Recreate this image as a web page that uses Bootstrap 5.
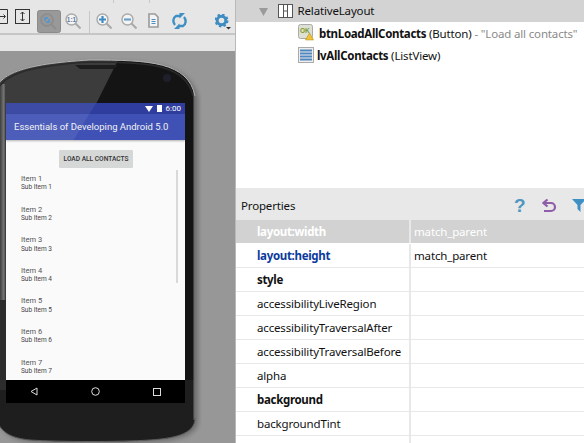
<!DOCTYPE html>
<html lang="en"><head><meta charset="utf-8"><title>Layout editor</title>
<link rel="stylesheet" href="https://cdn.jsdelivr.net/npm/bootstrap@5.3.0/dist/css/bootstrap.min.css">
<style>
html,body{width:584px;height:443px;overflow:hidden;margin:0;background:#fff}
body{font-family:"Noto Sans","Liberation Sans",sans-serif;font-size:11.5px;letter-spacing:-.16px;color:#111}
b,.bd,.key{letter-spacing:-.32px}
.ide{width:584px;height:443px}
.design{width:236px;background:#e6e6e6;overflow:hidden;border-right:1px solid #b8b8b8;flex:none}
.tools{height:35px;border-bottom:2px solid #c6c6c6;position:relative;flex:none}
.tick{position:absolute;top:0;width:1px;height:3px;background:#c6c6c6}
.tool{position:absolute;display:block}
.strip{height:16px;flex:none}
.canvas{flex:1;background:#979797;position:relative;overflow:hidden}
.shell{position:absolute;left:0;top:0}
.screen{position:absolute;left:6px;top:52px;width:179px;height:300px;background:#fafafa;display:flex;flex-direction:column;overflow:hidden}
.sheen{position:absolute;left:0;top:0;width:100%;height:38px;background:rgba(255,255,255,.07);clip-path:polygon(0 0,90px 0,67px 38px,0 38px)}
.sbar{height:11px;background:#2f3e9e;color:#fff;font-family:Roboto,sans-serif;font-size:8px;letter-spacing:0;line-height:11px;flex:none}
.abar{height:26px;background:#3f51b5;color:#f2f2f2;font-family:Roboto,sans-serif;font-size:9.5px;letter-spacing:0;line-height:26px;padding-left:8px;flex:none;box-shadow:0 1px 2px rgba(0,0,0,.3)}
.sim{flex:1;position:relative;overflow:hidden;font-family:Roboto,sans-serif;letter-spacing:0}
.loadbtn{display:block;width:74px;height:18px;margin:10px 0 0 53px;background:#d6d7d7;color:#333;font-size:6.6px;font-weight:500;line-height:18px;text-align:center;border-radius:1px;white-space:nowrap}
.sc{position:absolute;left:170px;top:30px;width:2px;height:113px;background:#d9d9d9}
.it{height:30.6px;margin-left:15px;padding-top:1px;line-height:8.4px;color:#444}
.it b{display:block;font-weight:400;font-size:7.5px;letter-spacing:0;color:#555}
.it i{display:block;font-style:normal;font-size:6.5px;color:#444}
.items{padding-top:6px}
.navb{height:23px;background:#000;flex:none;padding:0 24px}
.side{flex:1;min-width:0;background:#fff}
.tree{height:188px;flex:none;white-space:nowrap;overflow:hidden}
.tr{height:22px;line-height:22px;position:relative}
.sel{background:#d3d3d3;padding-left:61.500px}
.gt{color:#8a8a8a}
.prophead{height:32px;background:#e8e8e8;line-height:35px;padding-left:5px;position:relative;flex:none}
.pr{height:24px;line-height:23px;border-bottom:1px solid #e8e8e8;flex:none}
.pn{width:175px;padding-left:21px;border-right:2px solid #e8e8e8;flex:none}
.pv{padding-left:3px}
.pr.on{background:#d2d2d2;color:#fff;border-bottom-color:#fff}
.pn.key{color:#0b3a9c;font-weight:700}
.pn.bd{font-weight:700}
</style></head><body>
<div class="ide d-flex">
 <div class="design d-flex flex-column">
  <div class="tools">
   <span class="tick" style="left:113px"></span><span class="tick" style="left:149px"></span>
   <svg class="tool" style="left:0;top:9px" width="31" height="16" viewBox="0 0 31 16" fill="none" stroke="#333"><path d="M-2 .5H7.500V14.500H-2"/><path d="M0 7.500H5M3.500 5.500l2 2-2 2" /><rect x="15.500" y=".5" width="14" height="14"/><path d="M22.500 3v9M20.500 5l2-2 2 2M20.500 10l2 2 2-2"/></svg>
   <svg class="tool" style="left:37px;top:10px" width="24" height="23" viewBox="0 0 24 23"><rect x=".5" y=".5" width="23" height="22" rx="2" fill="#999" stroke="#8b8b8b"/><circle cx="10" cy="10" r="6" fill="none" stroke="#8e8e8e" stroke-width="2"/><path d="M14 14l5 5" stroke="#8e8e8e" stroke-width="2"/><path d="M7 7h4v2H9v2H7zM13 13H9v-2h2V9h2z" fill="#5f95c4"/></svg>
   <svg class="tool" style="left:65px;top:13px" width="16" height="16" viewBox="0 0 16 16"><circle cx="6.500" cy="6.500" r="5.500" fill="#f4f4f4" stroke="#a9a9a9" stroke-width="1.400"/><path d="M10.500 10.500l5 5" stroke="#a9a9a9" stroke-width="2"/><text x="6.500" y="9" text-anchor="middle" font-size="6.500" font-weight="700" fill="#5f7f9f" font-family="Liberation Sans" letter-spacing="0">1:1</text></svg>
   <span class="tick" style="left:89px;top:11px;height:22px"></span>
   <svg class="tool" style="left:96px;top:13px" width="16" height="16" viewBox="0 0 16 16"><circle cx="6.500" cy="6.500" r="5.500" fill="#f4f4f4" stroke="#a9a9a9" stroke-width="1.400"/><path d="M10.500 10.500l5 5" stroke="#a9a9a9" stroke-width="2"/><path d="M3 6.500h7M6.500 3v7" stroke="#3f8cc2" stroke-width="2.200"/></svg>
   <svg class="tool" style="left:121px;top:13px" width="16" height="16" viewBox="0 0 16 16"><circle cx="6.500" cy="6.500" r="5.500" fill="#f4f4f4" stroke="#a9a9a9" stroke-width="1.400"/><path d="M10.500 10.500l5 5" stroke="#a9a9a9" stroke-width="2"/><path d="M3 6.500h7" stroke="#6aa3cb" stroke-width="2.200"/></svg>
   <svg class="tool" style="left:148px;top:13px" width="11" height="15" viewBox="0 0 11 15"><path d="M1 1h6l3 3v10H1z" fill="#f4f4f4" stroke="#9a9a9a" stroke-width="1.600"/><path d="M3.500 6.500h4M3.500 8.500h4M3.500 10.500h4" stroke="#4a90c0"/></svg>
   <svg class="tool" style="left:172px;top:13px" width="15" height="16" viewBox="0 0 15 16" fill="none" stroke="#3d8fc4" stroke-width="2.400"><path d="M3 12C.5 9 1 4.500 4 3h5"/><path d="M12 4c2.500 3 2 7.500-1 9H6"/><path d="M13 0L7.500 5.500V0zM2 16l5.500-5.500V16z" fill="#3d8fc4" stroke="none"/></svg>
   <svg class="tool" style="left:215px;top:14px" width="16" height="16" viewBox="0 0 16 16"><circle cx="6.500" cy="6.500" r="4.300" fill="none" stroke="#3f8cc2" stroke-width="3"/><circle cx="6.500" cy="6.500" r="6" fill="none" stroke="#3f8cc2" stroke-width="2" stroke-dasharray="2.400 2.300"/><path d="M11 13h5l-2.500 2.500z" fill="#333"/></svg>
  </div>
  <div class="strip"></div>
  <div class="canvas">
   <svg class="shell" width="202" height="392" viewBox="0 51 202 392">
    <defs>
     <clipPath id="bodyclip"><path d="M-6 96C-4 74 22 64 90 60C150 60 188 62 195 96V418C195 432 180 438 150 440C120 442 60 442 30 440C12 438 0 434 -6 414Z"/></clipPath>
     <linearGradient id="lft" x1="0" x2="1" y1="0" y2="0"><stop offset="0" stop-color="#3e3e3e"/><stop offset=".65" stop-color="#777"/><stop offset="1" stop-color="#2a2a2a"/></linearGradient>
     <filter id="blur1" x="-10%" y="-10%" width="120%" height="120%"><feGaussianBlur stdDeviation="2.500"/></filter>
    </defs>
    <path d="M-6 96C-4 74 22 64 90 60C150 60 188 62 195 96V418C195 432 180 438 150 440C120 442 60 442 30 440C12 438 0 434 -6 414Z" fill="#000" opacity=".28" transform="translate(3 2)" filter="url(#blur1)"/>
    <path d="M-6 96C-4 74 22 64 90 60C150 60 188 62 195 96V418C195 432 180 438 150 440C120 442 60 442 30 440C12 438 0 434 -6 414Z" fill="#141414"/>
    <g clip-path="url(#bodyclip)">
     <path d="M-6 60H118L73 150H-6Z" fill="#3c3c3c"/>
     <rect x="-6" y="380" width="210" height="65" fill="#1e1e1e"/>
     <rect x="0" y="84" width="6" height="216" fill="url(#lft)"/>
     <rect x="0" y="300" width="6" height="90" fill="#2c2c2c"/>
     <rect x="193.500" y="90" width="2" height="330" fill="#6a6a6a"/>
    </g>
    <path d="M-6 96C-4 74 22 64 90 60C150 60 188 62 195 96" fill="none" stroke="#b5b5b5" stroke-width="1"/>
    <path d="M-4 96C-2 76 24 66 90 62C148 62 186 64 193 96" fill="none" stroke="#2b2b2b" stroke-width="1.400"/>
    <path d="M75 65H118L114 69H80Z" fill="#1d1d1d"/>
    <circle cx="167" cy="78" r="4" fill="#1f1f2b"/>
    <path d="M195 418C195 432 180 438 150 440C120 442 60 442 30 440C12 438 0 434 -6 414" fill="none" stroke="#5e5e5e" stroke-width="1"/>
   </svg>
   <div class="screen">
    <div class="sbar d-flex justify-content-end align-items-center pe-1">
     <svg class="me-1" width="8" height="6" viewBox="0 0 8 6"><path d="M0 0h8L4 6z" fill="#fff"/></svg>
     <svg class="me-1" width="5" height="7" viewBox="0 0 5 7"><rect width="5" height="7" fill="#fff"/></svg>
     <span>6:00</span>
    </div>
    <div class="abar">Essentials of Developing Android 5.0</div>
    <div class="sheen"></div>
    <div class="sim">
     <span class="loadbtn">LOAD ALL CONTACTS</span>
     <div class="sc"></div>
     <div class="items">
      <div class="it"><b>Item 1</b><i>Sub Item 1</i></div>
      <div class="it"><b>Item 2</b><i>Sub Item 2</i></div>
      <div class="it"><b>Item 3</b><i>Sub Item 3</i></div>
      <div class="it"><b>Item 4</b><i>Sub Item 4</i></div>
      <div class="it"><b>Item 5</b><i>Sub Item 5</i></div>
      <div class="it"><b>Item 6</b><i>Sub Item 6</i></div>
      <div class="it"><b>Item 7</b><i>Sub Item 7</i></div>
     </div>
    </div>
    <div class="navb d-flex justify-content-between align-items-center">
     <svg width="8" height="9" viewBox="0 0 8 9" fill="none" stroke="#ddd"><path d="M7 1v7L1 4.500z"/></svg>
     <svg width="9" height="9" viewBox="0 0 9 9" fill="none" stroke="#ddd"><circle cx="4.500" cy="4.500" r="3.800"/></svg>
     <svg width="8" height="8" viewBox="0 0 8 8" fill="none" stroke="#ddd"><rect x=".5" y=".5" width="7" height="7"/></svg>
    </div>
   </div>
  </div>
 </div>
 <div class="side d-flex flex-column">
  <div class="tree">
   <div class="tr sel"><svg class="tool" style="left:23px;top:8px" width="9" height="8"><path d="M0 0h9L4.500 8z" fill="#9a9a9a"/></svg><svg class="tool" style="left:42px;top:4px" width="15" height="14" viewBox="0 0 15 14" fill="#fff" stroke="#555"><rect x=".5" y=".5" width="14" height="13"/><path d="M5.500 .5v13M9.500 .5v13" /><path d="M5.500 7h4" /></svg>RelativeLayout</div>
   <div class="tr" style="padding-left:83px;line-height:23px"><svg class="tool" style="left:62px;top:2px" width="16" height="17" viewBox="0 0 16 17"><rect x=".5" y=".5" width="14" height="14" rx="2" fill="#dfe0d4" stroke="#aaa"/><text x="2" y="9" font-size="6.500" font-weight="700" fill="#7a9a2a" font-family="Liberation Sans" letter-spacing="0">OK</text><path d="M11.500 9l4 7h-8z" fill="#f2c230" stroke="#a8871a" stroke-width=".5"/></svg><b>btnLoadAllContacts</b> (Button) <span class="gt">- "Load all contacts"</span></div>
   <div class="tr" style="padding-left:81px;line-height:23px"><svg class="tool" style="left:62px;top:3px" width="16" height="16" viewBox="0 0 16 16"><rect x=".5" y=".5" width="15" height="15" fill="#eee" stroke="#aaa"/><path d="M2 3.500h12M2 6.500h12M2 9.500h12M2 12.500h12" stroke="#4f86bd" stroke-width="2"/></svg><b>lvAllContacts</b> (ListView)</div>
  </div>
  <div class="prophead">Properties
   <span class="tool" style="left:278px;top:0;color:#4f97bf;font:700 19px/36px 'Liberation Sans',sans-serif">?</span>
   <svg class="tool" style="left:306px;top:11px" width="15" height="14" viewBox="0 0 15 14" fill="none" stroke="#8e5fa8" stroke-width="2.200"><path d="M2 12h7a4 4 0 0 0 0-8H3"/><path d="M5.500 .5L1.500 4l4 3.500" /></svg>
   <svg class="tool" style="left:336px;top:11px" width="14" height="14" viewBox="0 0 14 14"><path d="M0 0h14L8.500 6v7L5.500 10V6z" fill="#3d8fc4"/></svg>
  </div>
  <div class="pr on d-flex"><div class="pn bd">layout:width</div><div class="pv">match_parent</div></div>
  <div class="pr d-flex"><div class="pn key">layout:height</div><div class="pv">match_parent</div></div>
  <div class="pr d-flex"><div class="pn bd">style</div><div class="pv"></div></div>
  <div class="pr d-flex"><div class="pn">accessibilityLiveRegion</div><div class="pv"></div></div>
  <div class="pr d-flex"><div class="pn">accessibilityTraversalAfter</div><div class="pv"></div></div>
  <div class="pr d-flex"><div class="pn">accessibilityTraversalBefore</div><div class="pv"></div></div>
  <div class="pr d-flex"><div class="pn">alpha</div><div class="pv"></div></div>
  <div class="pr d-flex"><div class="pn bd">background</div><div class="pv"></div></div>
  <div class="pr d-flex"><div class="pn">backgroundTint</div><div class="pv"></div></div>
  <div class="pr d-flex flex-grow-1" style="border:0"><div class="pn"></div></div>
 </div>
</div>
<script src="https://cdn.jsdelivr.net/npm/bootstrap@5.3.0/dist/js/bootstrap.bundle.min.js"></script>
</body></html>
